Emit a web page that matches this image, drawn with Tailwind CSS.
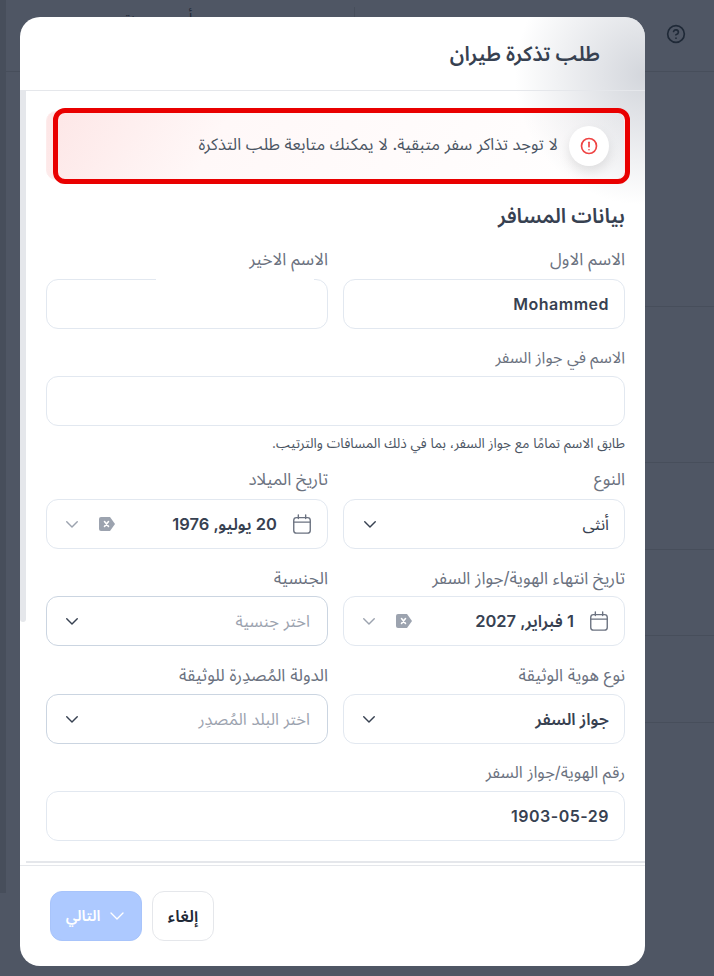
<!DOCTYPE html>
<html lang="ar" dir="rtl">
<head>
  <meta charset="UTF-8" />
  <meta name="viewport" content="width=device-width, initial-scale=1.0"/>
  <title>طلب تذكرة طيران</title>
  <script src="https://cdn.jsdelivr.net/npm/@tailwindcss/browser@4"></script>
</head>
<body class="bg-[#4f5664] font-['Inter','Noto_Sans_Arabic','Noto_Sans','DejaVu_Sans',sans-serif] text-[#374151]">
  <div class="relative w-[714px] h-[976px] overflow-hidden pt-[17px] pr-[69px]">
    <!-- page behind the overlay -->
    <svg class="absolute left-[666px] top-[24px] w-[20px] h-[20px] text-[#1f2937]" viewBox="0 0 24 24" fill="none" stroke="currentColor" stroke-width="2" stroke-linecap="round" stroke-linejoin="round"><circle cx="12" cy="12" r="10"/><path d="M9.100 9a3 3 0 0 1 5.800 1c0 2-3 3-3 3"/><path d="M12 17h.01"/></svg>
    <div class="absolute left-0 top-[71px] w-full h-px bg-[#474e5b]"></div>
    <div class="absolute left-[645px] right-0 top-[306px] h-px bg-[#474e5b]"></div>
    <div class="absolute left-[645px] right-0 top-[462px] h-px bg-[#474e5b]"></div>
    <div class="absolute left-[645px] right-0 top-[549px] h-px bg-[#474e5b]"></div>
    <div class="absolute left-[645px] right-0 top-[635px] h-px bg-[#474e5b]"></div>
    <div class="absolute left-[645px] right-0 top-[722px] h-px bg-[#474e5b]"></div>
    <div class="absolute left-[354px] top-[7px] w-px h-[10px] bg-[#474e5b]"></div>
    <div class="absolute left-0 top-0 w-[6px] h-[893px] bg-[#474e5b]"></div>
    <span class="absolute left-[189px] top-[7px] text-[14px] leading-[20px] text-[#1f2937]">أ</span>
    <span class="absolute left-[121px] top-[7px] text-[14px] leading-[20px] text-[#1f2937]">ت</span>

    <!-- modal -->
    <div class="relative w-[625px] h-[949px] bg-white rounded-[20px] overflow-hidden flex flex-col">
      <div class="absolute right-0 top-0 w-[150px] h-[200px] bg-[radial-gradient(circle_130px_at_100%_58px,#d3d6dc,#ffffff00)]"></div>

      <header class="relative h-[74px] shrink-0 border-b border-[#e5e7eb] pr-[45px] pt-[21px]">
        <h2 class="text-[20.5px] leading-[32px] font-semibold text-[#374151]">طلب تذكرة طيران</h2>
      </header>

      <main class="relative flex-1 pr-[20px] pl-[26px]">
        <div class="absolute left-0 top-0 w-[6px] h-[531px] rounded-b-[4px] bg-[#e5e7eb]"></div>

        <!-- alert -->
        <div class="relative mt-[20px] h-[69px] rounded-[10px] border border-[#fdecec] bg-[linear-gradient(300deg,#ffffff00_0%,#fff8f8_70%,#fde6e6_100%)] flex items-center pr-[15px] gap-[11px]">
          <div class="w-[40px] h-[40px] rounded-full bg-white shadow-[0_6px_12px_rgba(0,0,0,0.1)] flex items-center justify-center">
            <svg class="w-[20px] h-[20px] text-[#ef4444]" viewBox="0 0 24 24" fill="none" stroke="currentColor" stroke-width="2" stroke-linecap="round"><circle cx="12" cy="12" r="9"/><path d="M12 7.500v5.500"/><path d="M12 16.500h.01"/></svg>
          </div>
          <p class="-mt-[3px] text-[16.5px] text-[#4b5563]">لا توجد تذاكر سفر متبقية. لا يمكنك متابعة طلب التذكرة</p>
          <!-- red marker drawn over the alert -->
          <div class="absolute left-[6px] -right-[6px] -top-[4px] -bottom-[5px] rounded-[12px] border-[5px] border-[#e90000]"></div>
        </div>

        <h3 class="mt-[22px] text-[20.5px] leading-[28px] font-semibold text-[#374151]">بيانات المسافر</h3>

        <div class="mt-[19px] grid grid-cols-2 gap-x-[15px]">
          <div>
            <label class="block h-[20px] text-[17px] leading-[20px] mb-[10px] text-[#6b7280]">الاسم الاول</label>
            <div class="h-[50px] rounded-[12px] border border-[#e2e8f0] bg-white flex items-center px-[15px] text-[16px] tracking-[0.5px] font-semibold">Mohammed</div>
          </div>
          <div>
            <label class="block h-[20px] text-[17px] leading-[20px] mb-[10px] text-[#6b7280]">الاسم الاخير</label>
            <div class="relative h-[50px] rounded-[12px] border border-[#e2e8f0] bg-white">
              <div class="absolute right-[13px] top-[-1px] w-[158px] h-[2px] bg-white"></div>
            </div>
          </div>

          <div class="col-span-2 mt-[18px]">
            <label class="block h-[20px] text-[16px] leading-[20px] mb-[9px] text-[#6b7280]">الاسم في جواز السفر</label>
            <div class="h-[50px] rounded-[12px] border border-[#e2e8f0] bg-white"></div>
            <p class="mt-[8px] h-[18px] text-[13.6px] leading-[18px] text-[#4b5563]">طابق الاسم تمامًا مع جواز السفر، بما في ذلك المسافات والترتيب.</p>
          </div>

          <div class="mt-[17px]">
            <label class="block h-[20px] text-[17px] leading-[20px] mb-[10px] text-[#6b7280]">النوع</label>
            <div class="h-[50px] rounded-[12px] border border-[#e2e8f0] bg-white flex items-center justify-between pr-[15px] pl-[17px] text-[16.5px]">
              <span>أنثى</span>
              <svg class="w-[18px] h-[18px] text-[#374151]" viewBox="0 0 24 24" fill="none" stroke="currentColor" stroke-width="1.900" stroke-linecap="round" stroke-linejoin="round"><path d="m5 9 7 7 7-7"/></svg>
            </div>
          </div>
          <div class="mt-[17px]">
            <label class="block h-[20px] text-[17px] leading-[20px] mb-[10px] text-[#6b7280]">تاريخ الميلاد</label>
            <div class="h-[50px] rounded-[12px] border border-[#e2e8f0] bg-white flex items-center pr-[14px] pl-[16px] text-[16.5px] tracking-[0.5px] font-semibold">
              <svg class="w-[22px] h-[22px] text-[#6b7280]" viewBox="0 0 24 24" fill="none" stroke="currentColor" stroke-width="1.500" stroke-linecap="round" stroke-linejoin="round"><rect x="3" y="5" width="18" height="17" rx="3"/><path d="M8 2v4M16 2v4M3 10h18"/></svg>
              <span class="mr-[14px]">20 يوليو, 1976</span>
              <span class="mr-auto flex items-center gap-[17px]">
                <svg class="w-[18px] h-[16px] shrink-0" viewBox="0 0 18 16"><path d="M3 1h9l5 7-5 7H3a2 2 0 0 1-2-2V3a2 2 0 0 1 2-2z" fill="#9ca3af"/><path d="M6.500 5.500l4 5M10.500 5.500l-4 5" stroke="#fff" stroke-width="1.600" stroke-linecap="round"/></svg>
                <svg class="w-[18px] h-[18px] text-[#9ca3af]" viewBox="0 0 24 24" fill="none" stroke="currentColor" stroke-width="1.900" stroke-linecap="round" stroke-linejoin="round"><path d="m5 9 7 7 7-7"/></svg>
              </span>
            </div>
          </div>

          <div class="mt-[19px]">
            <label class="block h-[20px] text-[17px] leading-[20px] mb-[8px] text-[#6b7280]">تاريخ انتهاء الهوية/جواز السفر</label>
            <div class="h-[50px] rounded-[12px] border border-[#e2e8f0] bg-white flex items-center pr-[14px] pl-[16px] text-[16.5px] tracking-[0.5px] font-semibold">
              <svg class="w-[22px] h-[22px] text-[#6b7280]" viewBox="0 0 24 24" fill="none" stroke="currentColor" stroke-width="1.500" stroke-linecap="round" stroke-linejoin="round"><rect x="3" y="5" width="18" height="17" rx="3"/><path d="M8 2v4M16 2v4M3 10h18"/></svg>
              <span class="mr-[14px]">1 فبراير, 2027</span>
              <span class="mr-auto flex items-center gap-[17px]">
                <svg class="w-[18px] h-[16px] shrink-0" viewBox="0 0 18 16"><path d="M3 1h9l5 7-5 7H3a2 2 0 0 1-2-2V3a2 2 0 0 1 2-2z" fill="#9ca3af"/><path d="M6.500 5.500l4 5M10.500 5.500l-4 5" stroke="#fff" stroke-width="1.600" stroke-linecap="round"/></svg>
                <svg class="w-[18px] h-[18px] text-[#9ca3af]" viewBox="0 0 24 24" fill="none" stroke="currentColor" stroke-width="1.900" stroke-linecap="round" stroke-linejoin="round"><path d="m5 9 7 7 7-7"/></svg>
              </span>
            </div>
          </div>
          <div class="mt-[19px]">
            <label class="block h-[20px] text-[17px] leading-[20px] mb-[8px] text-[#6b7280]">الجنسية</label>
            <div class="h-[50px] rounded-[12px] border border-[#cbd5e1] bg-white flex items-center justify-between pr-[17px] pl-[16px] text-[16.5px] text-[#9ca3af]">
              <span>اختر جنسية</span>
              <svg class="w-[18px] h-[18px] text-[#374151]" viewBox="0 0 24 24" fill="none" stroke="currentColor" stroke-width="1.900" stroke-linecap="round" stroke-linejoin="round"><path d="m5 9 7 7 7-7"/></svg>
            </div>
          </div>

          <div class="mt-[19px]">
            <label class="block h-[20px] text-[17px] leading-[20px] mb-[9px] text-[#6b7280]">نوع هوية الوثيقة</label>
            <div class="h-[50px] rounded-[12px] border border-[#e2e8f0] bg-white flex items-center justify-between pr-[15px] pl-[16px] text-[16.5px] font-semibold">
              <span>جواز السفر</span>
              <svg class="w-[18px] h-[18px] text-[#374151]" viewBox="0 0 24 24" fill="none" stroke="currentColor" stroke-width="1.900" stroke-linecap="round" stroke-linejoin="round"><path d="m5 9 7 7 7-7"/></svg>
            </div>
          </div>
          <div class="mt-[19px]">
            <label class="block h-[20px] text-[17px] leading-[20px] mb-[9px] text-[#6b7280]">الدولة المُصدِرة للوثيقة</label>
            <div class="h-[50px] rounded-[12px] border border-[#cbd5e1] bg-white flex items-center justify-between pr-[17px] pl-[16px] text-[16.5px] text-[#9ca3af]">
              <span>اختر البلد المُصدِر</span>
              <svg class="w-[18px] h-[18px] text-[#374151]" viewBox="0 0 24 24" fill="none" stroke="currentColor" stroke-width="1.900" stroke-linecap="round" stroke-linejoin="round"><path d="m5 9 7 7 7-7"/></svg>
            </div>
          </div>

          <div class="col-span-2 mt-[18px]">
            <label class="block h-[20px] text-[16.5px] leading-[20px] mb-[9px] text-[#6b7280]">رقم الهوية/جواز السفر</label>
            <div class="h-[50px] rounded-[12px] border border-[#e2e8f0] bg-white flex items-center px-[15px] text-[16px] tracking-[0.5px] font-semibold">1903-05-29</div>
          </div>
        </div>
        <div class="absolute left-[6px] right-0 bottom-0 h-[2px] bg-[#e5e7eb]"></div>
      </main>

      <footer class="h-[101px] shrink-0 mt-[2px] border-t border-[#e5e7eb] flex items-end justify-end gap-[10px] pl-[30px] pb-[25px]">
        <button class="w-[62px] h-[50px] rounded-[12px] border border-[#e5e7eb] bg-white text-[16.5px] font-semibold text-[#1f2937]">إلغاء</button>
        <button class="w-[92px] h-[50px] rounded-[12px] border border-[#a8c4fb] bg-[#adc9ff] text-white text-[15px] font-semibold flex items-center justify-center gap-[8px]">
          <svg class="w-[18px] h-[18px]" viewBox="0 0 24 24" fill="none" stroke="currentColor" stroke-width="1.800" stroke-linecap="round" stroke-linejoin="round"><path d="m4 8 8 8 8-8"/></svg>
          <span>التالي</span>
        </button>
      </footer>
    </div>
  </div>
</body>
</html>
